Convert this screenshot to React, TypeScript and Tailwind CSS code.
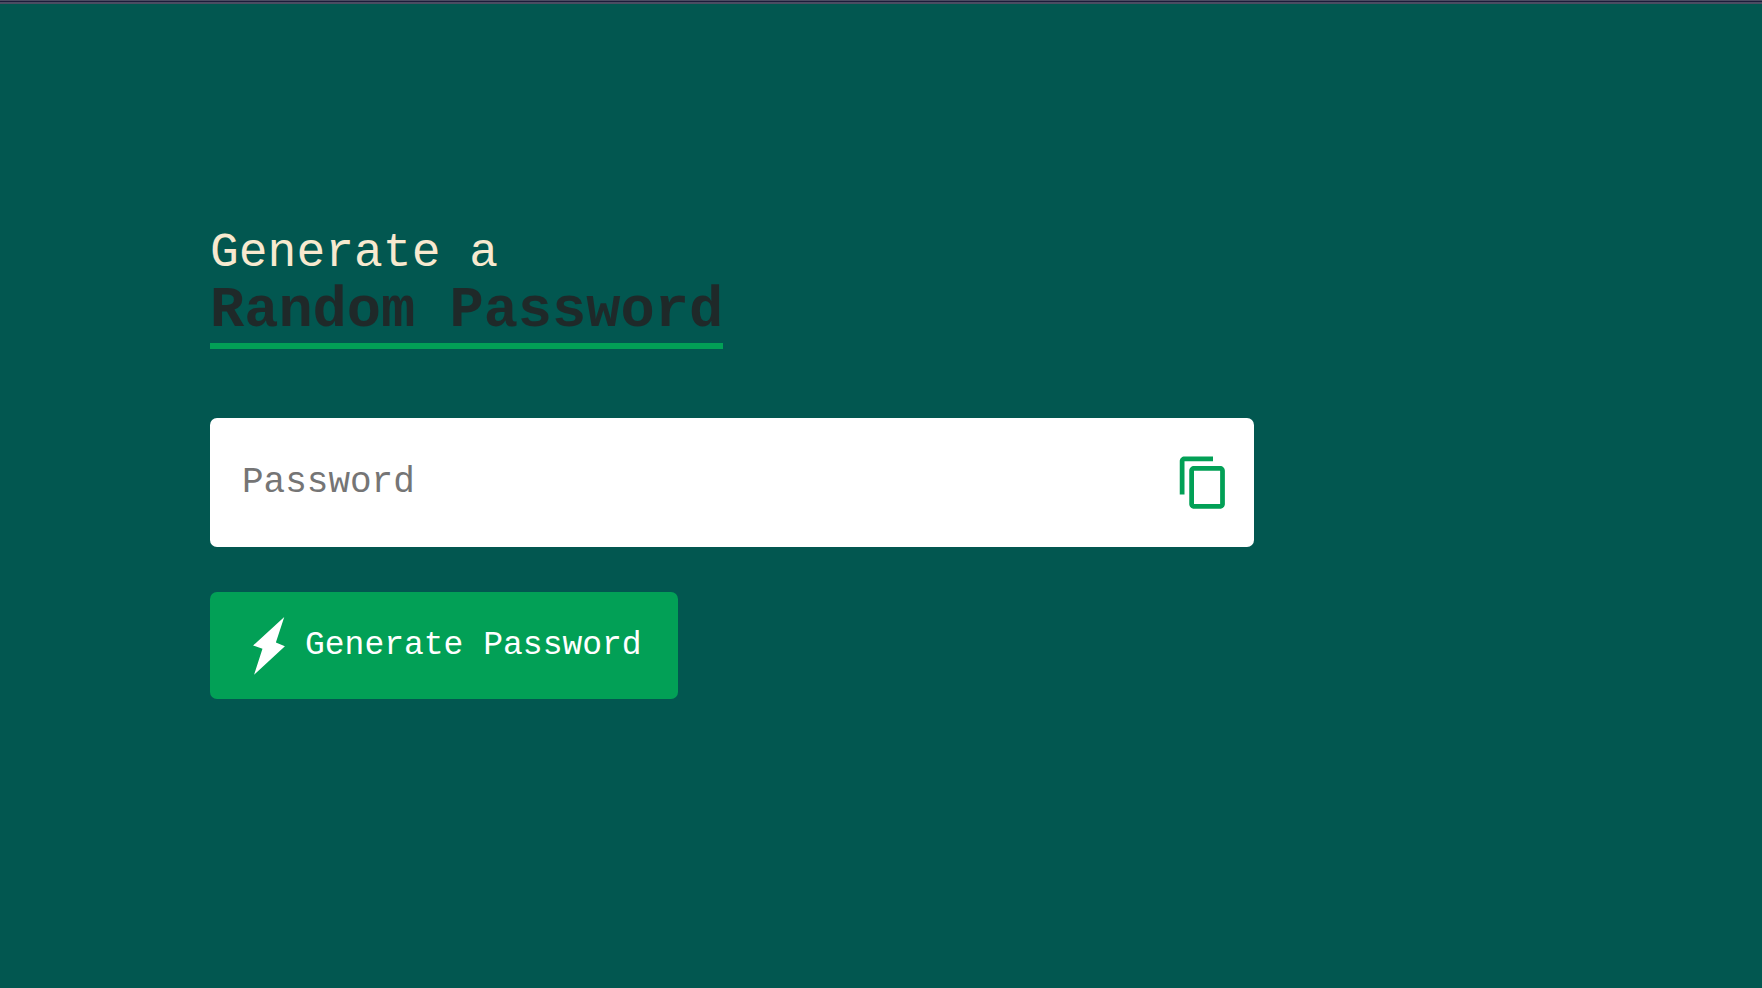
import { useState } from "react";
import { MdContentCopy } from "react-icons/md";

const CHARS =
  "ABCDEFGHIJKLMNOPQRSTUVWXYZabcdefghijklmnopqrstuvwxyz0123456789@#$%&*!?";

function createPassword(length: number): string {
  const values = crypto.getRandomValues(new Uint32Array(length));
  return Array.from(values, (v) => CHARS[v % CHARS.length]).join("");
}

function BoltIcon() {
  return (
    <svg viewBox="0 0 95 173" className="h-[58px] w-8 shrink-0" fill="currentColor" aria-hidden="true">
      <path d="M93 0 68 76 95 87 3 172 28 95 0 85Z" />
    </svg>
  );
}

export default function App() {
  const [password, setPassword] = useState("");

  return (
    <div className="flex min-h-screen flex-col bg-[#025750] font-['Courier_New','Liberation_Mono',monospace]">
      <div className="h-1 border-b-2 border-t border-[#4b4c62] bg-[#1b1d3a]" />
      <main className="w-full max-w-[1254px] pl-[210px] pt-[222px]">
        <h1 className="text-[48px] leading-[54px] text-[#f7e9cf]">
          Generate a
          <br />
          <span className="inline-block whitespace-nowrap border-b-6 border-[#02a056] pb-px text-[57px] font-bold leading-[62px] text-[#1f2929]">
            Random Password
          </span>
        </h1>
        <div className="mt-[69px] flex h-[129px] items-center rounded-[7px] bg-white pl-8 pr-[22px]">
          <input
            type="text"
            aria-label="Password"
            placeholder="Password"
            readOnly
            value={password}
            className="min-w-0 flex-1 text-[36px] leading-[44px] text-[#1f2929] outline-none placeholder:text-[#757575]"
          />
          <button
            type="button"
            aria-label="Copy password"
            onClick={() => navigator.clipboard?.writeText(password)}
            className="text-[#02a056]"
          >
            <MdContentCopy size={57} />
          </button>
        </div>
        <button
          type="button"
          onClick={() => setPassword(createPassword(12))}
          className="mt-[45px] flex h-[107px] items-center gap-5 whitespace-nowrap rounded-[7px] bg-[#02a056] pl-[43px] pr-9 text-[33px] leading-[40px] text-white"
        >
          <BoltIcon />
          Generate Password
        </button>
      </main>
    </div>
  );
}
